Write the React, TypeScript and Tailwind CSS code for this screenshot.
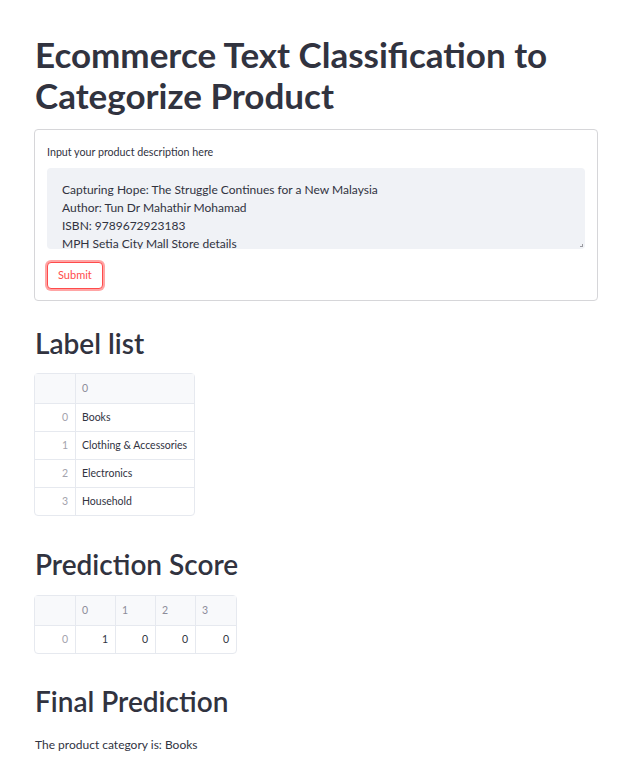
const labels = ["Books", "Clothing & Accessories", "Electronics", "Household"];
const scores = [1, 0, 0, 0];

const App = () => {
  return (
    <div
      className="min-h-screen w-full bg-white text-[#31333f]"
      style={{ fontFamily: "Lato, 'Noto Sans', sans-serif" }}
    >
      <div className="w-[564px] ml-[34px] pt-[34px] pb-8">
        <h1 className="text-[35px] leading-[41px] font-bold pl-[1px]">
          Ecommerce Text Classification to Categorize Product
        </h1>

        <form className="mt-[13px] border border-[#d6d6d9] rounded-[4px] px-[12px] pt-[15px] pb-[11px]">
          <label className="block text-[10.7px] leading-[14px] mb-[9px]">
            Input your product description here
          </label>
          <div className="relative bg-[#f0f2f6] rounded-[4px] h-[81px] overflow-hidden pl-[15px] pt-[13px] text-[12px] leading-[18px]">
            <p>Capturing Hope: The Struggle Continues for a New Malaysia</p>
            <p>Author: Tun Dr Mahathir Mohamad</p>
            <p>ISBN: 9789672923183</p>
            <p className="whitespace-nowrap">MPH Setia City Mall Store details</p>
            <span className="absolute right-[2px] bottom-[2px] w-[3px] h-[3px] border-r border-b border-[#9a9aa0]" />
          </div>
          <button
            type="button"
            className="mt-[13px] h-[27px] px-[10px] text-[11px] text-[#ff4b4b] bg-white border border-[#ff4b4b] rounded-[4px] shadow-[0_0_0_2px_rgba(255,75,75,0.5)]"
          >
            Submit
          </button>
        </form>

        <h2 className="mt-[24px] text-[28px] leading-[36px] font-semibold pl-[1px]">Label list</h2>
        <table className="mt-[12px] border-separate border-spacing-0 border border-[#e6e9ef] rounded-[4px] text-[10.5px] whitespace-nowrap">
          <thead>
            <tr className="h-[29px] bg-[#f8f9fb]">
              <th className="w-[41px] border-r border-[#e6e9ef]" />
              <th className="w-[118px] text-left font-normal text-[#8c8c9a] px-[6px]">0</th>
            </tr>
          </thead>
          <tbody>
            {labels.map((label, i) => (
              <tr key={i} className="h-[28px]">
                <td className="border-t border-r border-[#e6e9ef] text-right pr-[7px] text-[#a3a3ad]">{i}</td>
                <td className="border-t border-[#e6e9ef] px-[6px]">{label}</td>
              </tr>
            ))}
          </tbody>
        </table>

        <h2 className="mt-[30px] text-[28px] leading-[36px] font-semibold pl-[1px]">Prediction Score</h2>
        <table className="mt-[13px] border-separate border-spacing-0 border border-[#e6e9ef] rounded-[4px] text-[10.5px]">
          <thead>
            <tr className="h-[29px] bg-[#f8f9fb]">
              <th className="w-[41px] border-r border-[#e6e9ef]" />
              {scores.map((_, i) => (
                <th
                  key={i}
                  className={`w-[40px] text-left font-normal text-[#8c8c9a] px-[6px] ${i < 3 ? "border-r border-[#e6e9ef]" : ""}`}
                >
                  {i}
                </th>
              ))}
            </tr>
          </thead>
          <tbody>
            <tr className="h-[28px]">
              <td className="border-t border-r border-[#e6e9ef] text-right pr-[7px] text-[#a3a3ad]">0</td>
              {scores.map((s, i) => (
                <td
                  key={i}
                  className={`border-t border-[#e6e9ef] text-right pr-[7px] ${i < 3 ? "border-r" : ""}`}
                >
                  {s}
                </td>
              ))}
            </tr>
          </tbody>
        </table>

        <h2 className="mt-[29px] text-[28px] leading-[36px] font-semibold pl-[1px]">Final Prediction</h2>
        <p className="mt-[18px] text-[12px] leading-[16px] pl-[1px]">The product category is: Books</p>
      </div>
    </div>
  );
};

export default App;
